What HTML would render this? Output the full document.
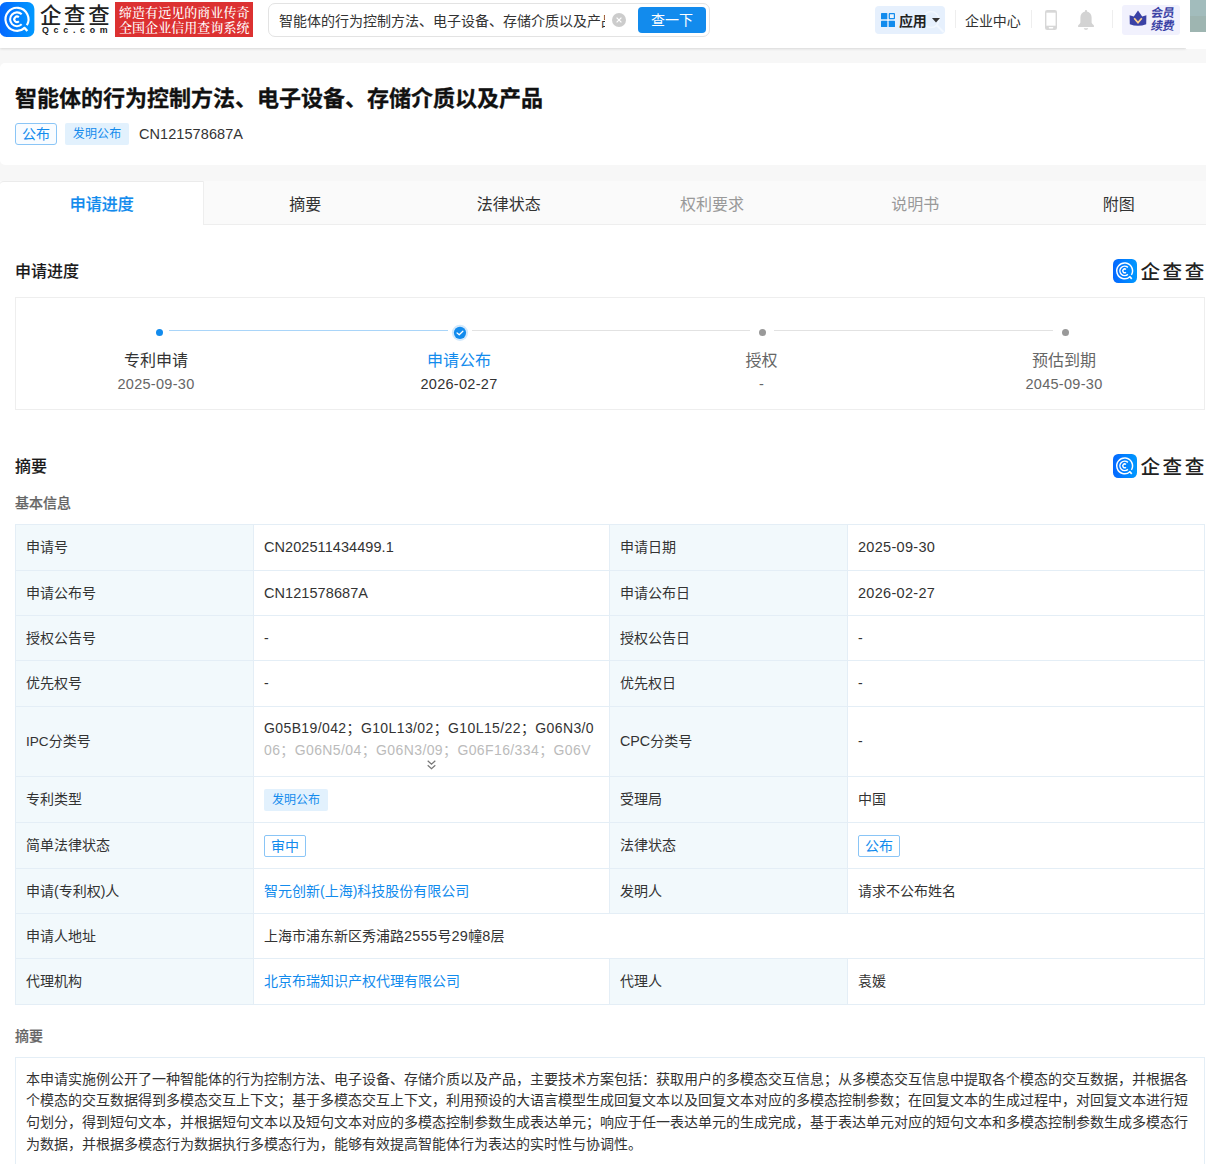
<!DOCTYPE html>
<html lang="zh-CN">
<head>
<meta charset="utf-8">
<title>智能体的行为控制方法、电子设备、存储介质以及产品 - 企查查</title>
<style>
*{box-sizing:border-box;margin:0;padding:0}
html{width:1206px;height:1164px;overflow:hidden;background:#f7f7f7}
body{position:relative;width:1206px;height:1164px;overflow:hidden;background:#f7f7f7;
  font-family:"Liberation Sans","Noto Sans CJK SC",sans-serif;font-size:14px;color:#333;line-height:22px}
.abs{position:absolute;white-space:nowrap}
.pri{color:#128bed}
.lt{letter-spacing:.3px;font-size:14.5px}
.cn{letter-spacing:.07px;font-size:14.5px}
/* header */
#hdr{position:absolute;left:0;top:0;width:1186px;height:48px;background:#fff;box-shadow:0 1px 2.5px rgba(0,0,0,.13)}
#hdrR{position:absolute;left:1186px;top:0;width:20px;height:49px;background:#fff}
#avatar{position:absolute;left:1190px;top:0;width:16px;height:32px;background:linear-gradient(#a2bcbc 0,#a2bcbc 50%,#9eb5b1 50%,#9eb5b1 100%)}
#slogan{position:absolute;left:115px;top:2px;width:138px;height:35px;background:#dc3131;color:#fff;font-family:"Liberation Serif","Noto Serif CJK SC",serif;font-size:13px;line-height:15.3px;padding:3px 0 0 4px;letter-spacing:.05px;font-weight:500;white-space:nowrap}
#search{position:absolute;left:268px;top:3px;width:442px;height:34px;border:1px solid #e3e3e3;border-radius:7px;background:#fff}
#search .q{position:absolute;left:10px;top:6px;width:326px;height:22px;overflow:hidden;white-space:nowrap;font-size:14px;line-height:22px;color:#333}
#search .clr{position:absolute;left:343px;top:9px;width:14px;height:14px;border-radius:50%;background:#ccc}
#search .btn{position:absolute;left:369px;top:3px;width:68px;height:26px;border-radius:4px;background:#128bed;color:#fff;font-size:14px;line-height:26px;text-align:center}
.vdiv{position:absolute;top:10px;width:1px;height:18px;background:#eee}
#app{position:absolute;left:875px;top:6px;width:70px;height:28px;border-radius:4px;background:#e6f0fd}
#vip{position:absolute;left:1122px;top:5px;width:58px;height:30px;border-radius:3px;background:#f1f1fd}
#vip .t{position:absolute;left:29px;top:1.5px;font-size:12px;line-height:13.6px;font-weight:bold;color:#3a41a5;white-space:nowrap;transform:skewX(-9deg);letter-spacing:-.4px}
/* card 1 */
#card1{position:absolute;left:0;top:63px;width:1220px;height:102px;background:#fff;border-radius:5px 0 0 5px}
#title{position:absolute;left:15px;top:84px;font-size:22px;line-height:30px;font-weight:bold;color:#111;-webkit-text-stroke:.3px #111;white-space:nowrap}
.tag{position:absolute;height:22px;line-height:20px;border-radius:2px;white-space:nowrap;text-align:center}
.tag.o{border:1px solid #8ac5f6;color:#128bed;font-size:14px;background:#f9fcff;border-radius:3px}
.tag.f{background:#e2f1fd;color:#128bed;font-size:12px;line-height:23.6px;letter-spacing:.2px;text-indent:.2px}
/* tabs */
#tabs{position:absolute;left:0;top:181px;width:1220px;height:44px;background:#fafafa;border-bottom:1px solid #eee}
#tabs .tab{position:absolute;top:0;width:203.4px;height:44px;line-height:48px;text-align:center;font-size:16px;color:#333}
#tabs .tab.on{background:#fff;color:#128bed;font-weight:500;-webkit-text-stroke:.2px #128bed;height:44px;width:204px;padding-left:.4px;border-radius:4px 0 0 0;border-top:1px solid #ebebeb;border-right:1px solid #eee;line-height:46px}
#tabs .tab.dis{color:#999}
/* main */
#main{position:absolute;left:0;top:225px;width:1220px;height:960px;background:#fff}
.h16{font-size:16px;font-weight:500;color:#1a1a1a;line-height:24px;-webkit-text-stroke:.1px #1a1a1a}
.h14{font-size:14px;font-weight:500;color:#666;line-height:22px;-webkit-text-stroke:.2px #666}
#prog{position:absolute;left:15px;top:297px;width:1190px;height:113px;border:1px solid #eee;background:#fff}
.st-t.pri{color:#128bed}
.st-t{position:absolute;width:160px;text-align:center;font-size:16px;line-height:24px;color:#333;white-space:nowrap}
.st-d{position:absolute;width:160px;text-align:center;font-size:14.5px;line-height:22px;color:#666;white-space:nowrap;letter-spacing:.3px}
.ln{position:absolute;top:330px;height:1px;width:279px}
.dot{position:absolute;width:7px;height:7px;border-radius:50%}
/* table */
#tb{position:absolute;left:15px;top:524px;width:1189px;border-collapse:collapse;table-layout:fixed;font-size:14px;line-height:22px}
#tb td{border:1px solid #e4eef6;padding:0 10px 1px;vertical-align:middle;color:#333;background:#fff;position:relative}
#tb td.l{background:#f2f9fc}
#tb .tg{display:inline-block;height:22px;border-radius:2px;vertical-align:middle;white-space:nowrap}
#tb .tg.f{background:#e2f1fd;color:#128bed;font-size:12px;line-height:22px;padding:0 8px}
#tb .tg.o{border:1px solid #8ac5f6;color:#128bed;font-size:14px;line-height:20px;padding:0 6px;background:#fff}
#abs{position:absolute;left:15px;top:1057px;width:1190px;height:130px;border:1px solid #e4eef6;background:#fff;padding:10.6px 10px 0 10px;font-size:14px;line-height:21.8px;color:#333;white-space:nowrap}
.ipc{white-space:nowrap;line-height:22px}
.lt2{letter-spacing:.39px}
.fd{color:#bbb}
.chev{position:absolute;left:173px;top:53px}
.wm{position:absolute;left:1113px;width:110px;height:24px}
.wm .tx{position:absolute;left:27.5px;top:-1.6px;font-size:19.6px;line-height:30px;letter-spacing:2.5px;color:#222;font-weight:500;white-space:nowrap}
</style>
</head>
<body>
<div id="hdr">
  <svg class="abs" style="left:0;top:2px" width="35" height="35" viewBox="0 0 35 35">
    <defs><linearGradient id="lg" x1="0" y1="0" x2="1" y2="0"><stop offset="0" stop-color="#0468ff"/><stop offset="1" stop-color="#0099ff"/></linearGradient></defs>
    <rect x="-.4" y="0" width="34.800" height="35" rx="7" fill="url(#lg)"/>
    <g fill="none" stroke="#fff" stroke-width="2.1">
      <path d="M26.86 23.22 A11.5 11.5 0 1 0 24.70 25.85"/>
      <path d="M23.96 25.16 L27.34 28.98" stroke-width="2.3"/>
      <path d="M21.71 12.25 A6.9 6.9 0 1 0 21.71 22.35"/>
      <path d="M18.84 15.33 A2.7 2.7 0 1 0 18.84 19.27"/>
    </g>
  </svg>
  <div class="abs" style="left:40px;top:1px;font-size:21.4px;line-height:30px;letter-spacing:2.7px;color:#222;font-weight:500">企查查</div>
  <div class="abs" style="left:42px;top:24px;font-size:8.8px;line-height:13px;letter-spacing:4.75px;color:#222;font-weight:bold">Qcc.com</div>
  <div id="slogan">缔造有远见的商业传奇<br>全国企业信用查询系统</div>
  <div id="search">
    <div class="q">智能体的行为控制方法、电子设备、存储介质以及产品</div>
    <div class="clr"><svg width="14" height="14" viewBox="0 0 14 14" style="display:block"><path d="M4.6 4.6 L9.4 9.4 M9.4 4.6 L4.6 9.4" stroke="#fff" stroke-width="1.2" fill="none"/></svg></div>
    <div class="btn">查一下</div>
  </div>
  <div id="app">
    <svg class="abs" style="left:6px;top:7px" width="14" height="14" viewBox="0 0 14 14">
      <rect x="0" y="0" width="6.3" height="6.3" rx=".6" fill="#128bed"/>
      <rect x="0" y="7.7" width="6.3" height="6.3" rx=".6" fill="#128bed"/>
      <rect x="7.7" y="7.7" width="6.3" height="6.3" rx=".6" fill="#128bed"/>
      <rect x="8.3" y=".6" width="5.1" height="5.1" rx=".4" fill="#eaf3fe" stroke="#128bed" stroke-width="1.2"/>
    </svg>
    <svg class="abs" style="left:46px;top:4px" width="24" height="24" viewBox="0 0 24 24"><circle cx="10" cy="9.600" r="8" fill="none" stroke="#f2f8ff" stroke-width="1.5"/><path d="M16 15.500 L22 21.500" stroke="#f2f8ff" stroke-width="2" fill="none" stroke-linecap="round"/></svg>
    <div class="abs" style="left:24px;top:4px;font-size:14px;line-height:22px;font-weight:bold;color:#222;letter-spacing:-.3px">应用</div>
    <svg class="abs" style="left:57px;top:12px" width="8" height="5" viewBox="0 0 8 5"><path d="M0 0 H8 L4 4.4 Z" fill="#333"/></svg>
  </div>
  <div class="vdiv" style="left:955px"></div>
  <div class="abs" style="left:965px;top:10px;font-size:14px;line-height:22px;color:#333;letter-spacing:-.1px">企业中心</div>
  <div class="vdiv" style="left:1031px"></div>
  <svg class="abs" style="left:1045px;top:10px" width="12" height="20" viewBox="0 0 12 20">
    <rect x="0" y="0" width="12" height="20" rx="2.2" fill="#d7d7d7"/>
    <rect x="1.4" y="2.700" width="9.2" height="13" fill="#fff"/>
    <rect x="3.700" y="17" width="4.600" height="1.400" rx=".7" fill="#fff"/>
  </svg>
  <svg class="abs" style="left:1078px;top:9px" width="16" height="22" viewBox="0 0 16 22">
    <path d="M8 1c.6 0 1 .4 1 1v.5c2.600.6 4.600 2.800 4.600 5.800v4.700c0 1 .5 1.800 1.400 2.600l.9.9v1.400H.1v-1.400l.9-.9c.9-.8 1.400-1.600 1.400-2.600V8.300c0-3 2-5.200 4.600-5.800V2c0-.6.4-1 1-1z" fill="#d3d3d3"/>
    <path d="M5.800 19.200h4.400c-.3 1-1.100 1.600-2.200 1.600s-1.900-.6-2.200-1.600z" fill="#d3d3d3"/>
  </svg>
  <div class="vdiv" style="left:1112px"></div>
  <div id="vip">
    <svg class="abs" style="left:7px;top:5px" width="18" height="17" viewBox="0 0 18 17">
      <path d="M.6 5.200 L4.800 6.600 L9 .4 L13.200 6.600 L17.400 5.200 L17.200 14.200 Q9 17.400 .8 14.200 Z" fill="#3a41a5"/>
      <path d="M5.200 8.300 L9 12.600 L12.800 8.300" fill="none" stroke="#ffd28e" stroke-width="1.7" stroke-linejoin="miter"/>
    </svg>
    <div class="t">会员</div><div class="t" style="top:15.1px">续费</div>
  </div>
</div>
<div id="hdrR"></div>
<div id="avatar"></div>

<div id="card1"></div>
<div id="title">智能体的行为控制方法、电子设备、存储介质以及产品</div>
<div class="tag o" style="left:15px;top:123px;width:42px">公布</div>
<div class="tag f" style="left:65px;top:123px;width:64px">发明公布</div>
<div class="abs cn" style="left:139px;top:123px;line-height:22px;color:#333">CN121578687A</div>

<div id="tabs">
  <div class="tab on" style="left:0">申请进度</div>
  <div class="tab" style="left:203.6px">摘要</div>
  <div class="tab" style="left:407px">法律状态</div>
  <div class="tab dis" style="left:610.3px">权利要求</div>
  <div class="tab dis" style="left:813.6px">说明书</div>
  <div class="tab" style="left:1017px">附图</div>
</div>

<div id="main"></div>
<div class="abs h16" style="left:15px;top:260px">申请进度</div>
<div class="wm" style="top:259px">
  <svg class="abs" style="left:0;top:0" width="24" height="24" viewBox="0 0 35 35">
    <rect x="0" y="0" width="35" height="35" rx="7.5" fill="url(#lg)"/>
    <g fill="none" stroke="#fff" stroke-width="2.2">
      <path d="M26.86 23.22 A11.5 11.5 0 1 0 24.70 25.85"/>
      <path d="M23.96 25.16 L27.34 28.98" stroke-width="2.4"/>
      <path d="M21.71 12.25 A6.9 6.9 0 1 0 21.71 22.35"/>
      <path d="M18.84 15.33 A2.7 2.7 0 1 0 18.84 19.27"/>
    </g>
  </svg>
  <div class="tx">企查查</div>
</div>
<div id="prog"></div>
<div class="ln" style="left:169px;background:#a9d5f9"></div>
<div class="ln" style="left:472px;background:#e2e2e2;width:278px"></div>
<div class="ln" style="left:774px;background:#e2e2e2"></div>
<div class="dot" style="left:156px;top:329px;background:#128bed"></div>
<svg class="abs" style="left:451px;top:324px" width="18" height="18" viewBox="0 0 18 18">
  <g transform="translate(.48 .34)">
  <circle cx="8.5" cy="8.5" r="8.100" fill="#d3e9fc"/>
  <circle cx="8.5" cy="8.5" r="6.100" fill="#128bed"/>
  <path d="M5.600 8.600 L7.750 10.400 L11.400 6.950" fill="none" stroke="#fff" stroke-width="1.3" stroke-linecap="round" stroke-linejoin="round"/>
  </g>
</svg>
<div class="dot" style="left:758.5px;top:329px;background:#999"></div>
<div class="dot" style="left:1062px;top:329px;background:#999"></div>
<div class="st-t" style="left:76px;top:349px">专利申请</div>
<div class="st-d" style="left:76px;top:372.5px">2025-09-30</div>
<div class="st-t pri" style="left:379px;top:349px">申请公布</div>
<div class="st-d" style="left:379px;top:372.5px;color:#333">2026-02-27</div>
<div class="st-t" style="left:681.500px;top:349px;color:#666">授权</div>
<div class="st-d" style="left:681.500px;top:372.5px">-</div>
<div class="st-t" style="left:984px;top:349px;color:#666">预估到期</div>
<div class="st-d" style="left:984px;top:372.5px">2045-09-30</div>

<div class="abs h16" style="left:15px;top:455px">摘要</div>
<div class="wm" style="top:454px">
  <svg class="abs" style="left:0;top:0" width="24" height="24" viewBox="0 0 35 35">
    <rect x="0" y="0" width="35" height="35" rx="7.5" fill="url(#lg)"/>
    <g fill="none" stroke="#fff" stroke-width="2.2">
      <path d="M26.86 23.22 A11.5 11.5 0 1 0 24.70 25.85"/>
      <path d="M23.96 25.16 L27.34 28.98" stroke-width="2.4"/>
      <path d="M21.71 12.25 A6.9 6.9 0 1 0 21.71 22.35"/>
      <path d="M18.84 15.33 A2.7 2.7 0 1 0 18.84 19.27"/>
    </g>
  </svg>
  <div class="tx">企查查</div>
</div>
<div class="abs h14" style="left:15px;top:492px">基本信息</div>
<table id="tb">
<colgroup><col style="width:238px"><col style="width:356px"><col style="width:238px"><col style="width:357px"></colgroup>
<tr style="height:46px"><td class="l">申请号</td><td><span class="cn">CN202511434499.1</span></td><td class="l">申请日期</td><td><span class="lt">2025-09-30</span></td></tr>
<tr style="height:45px"><td class="l">申请公布号</td><td><span class="cn">CN121578687A</span></td><td class="l">申请公布日</td><td><span class="lt">2026-02-27</span></td></tr>
<tr style="height:45px"><td class="l">授权公告号</td><td>-</td><td class="l">授权公告日</td><td>-</td></tr>
<tr style="height:46px"><td class="l">优先权号</td><td>-</td><td class="l">优先权日</td><td>-</td></tr>
<tr style="height:70px"><td class="l"><span style="font-size:13.6px">IPC</span>分类号</td><td style="vertical-align:top;padding-top:10px"><div class="ipc"><span class="lt2">G05B19/042；G10L13/02；G10L15/22；G06N3/0</span><br><span class="lt2 fd">06；G06N5/04；G06N3/09；G06F16/334；G06V</span></div>
<svg class="chev" width="9" height="10" viewBox="0 0 9 10"><path d="M.7 .8 L4.5 4.300 L8.300 .8 M.7 5.300 L4.500 8.800 L8.300 5.300" fill="none" stroke="#777" stroke-width="1.2"/></svg></td><td class="l"><span style="font-size:14.3px">CPC</span>分类号</td><td>-</td></tr>
<tr style="height:46px"><td class="l">专利类型</td><td><span class="tg f">发明公布</span></td><td class="l">受理局</td><td>中国</td></tr>
<tr style="height:46px"><td class="l">简单法律状态</td><td><span class="tg o">审中</span></td><td class="l">法律状态</td><td><span class="tg o">公布</span></td></tr>
<tr style="height:45px"><td class="l">申请(专利权)人</td><td class="pri" style="color:#128bed">智元创新(上海)科技股份有限公司</td><td class="l">发明人</td><td>请求不公布姓名</td></tr>
<tr style="height:45px"><td class="l">申请人地址</td><td colspan="3">上海市浦东新区秀浦路<span class="lt">2555</span>号<span class="lt">29</span>幢<span class="lt">8</span>层</td></tr>
<tr style="height:46px"><td class="l">代理机构</td><td style="color:#128bed">北京布瑞知识产权代理有限公司</td><td class="l">代理人</td><td>袁媛</td></tr>
</table>

<div class="abs h14" style="left:15px;top:1025px">摘要</div>
<div id="abs">本申请实施例公开了一种智能体的行为控制方法、电子设备、存储介质以及产品，主要技术方案包括：获取用户的多模态交互信息；从多模态交互信息中提取各个模态的交互数据，并根据各<br>个模态的交互数据得到多模态交互上下文；基于多模态交互上下文，利用预设的大语言模型生成回复文本以及回复文本对应的多模态控制参数；在回复文本的生成过程中，对回复文本进行短<br>句划分，得到短句文本，并根据短句文本以及短句文本对应的多模态控制参数生成表达单元；响应于任一表达单元的生成完成，基于表达单元对应的短句文本和多模态控制参数生成多模态行<br>为数据，并根据多模态行为数据执行多模态行为，能够有效提高智能体行为表达的实时性与协调性。</div>

</body>
</html>
